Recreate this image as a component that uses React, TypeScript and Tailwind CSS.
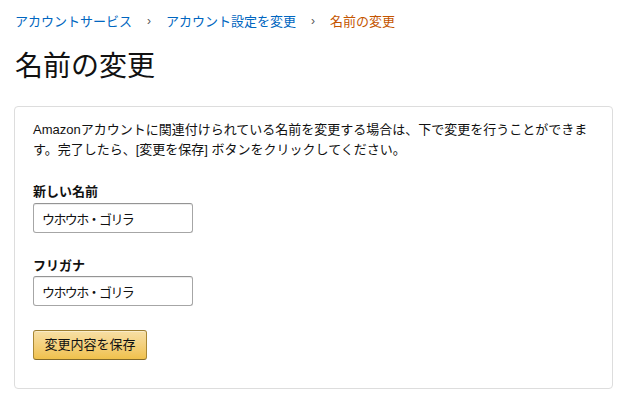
import React from "react";

export default function App() {
  return (
    <div
      className="w-[630px] h-[420px] bg-white text-[#111] px-[14px] pt-[12px]"
      style={{ fontFamily: '"Liberation Sans", "Noto Sans CJK JP", sans-serif' }}
    >
      <nav className="flex items-center text-[13px] leading-[19px]">
        <a className="text-[#0066c0] pl-[1px]">アカウントサービス</a>
        <span className="text-[#555] text-[12px] mx-[15px]">›</span>
        <a className="text-[#0066c0]">アカウント設定を変更</a>
        <span className="text-[#555] text-[12px] mx-[15px]">›</span>
        <span className="text-[#c45500]">名前の変更</span>
      </nav>
      <h1 className="mt-[18px] text-[28px] leading-[36px] font-normal pl-[1px]">名前の変更</h1>
      <div className="mt-[21px] w-[599px] border border-[#ddd] rounded-[4px] px-[18px] pt-[13px] pb-[28px]">
        <p className="text-[13px] leading-[20px] whitespace-nowrap">
          Amazonアカウントに関連付けられている名前を変更する場合は、下で変更を行うことができま
          <br />
          す。完了したら、[変更を保存] ボタンをクリックしてください。
        </p>
        <div className="mt-[22px] flex flex-col">
          <label className="text-[13px] leading-[19px] font-bold mb-[2px]">新しい名前</label>
          <input
            readOnly
            value="ウホウホ・ゴリラ"
            className="w-[160px] h-[30px] border border-[#a6a6a6] border-t-[#949494] rounded-[3px] px-[8px] text-[13px] tracking-[-1.6px] text-[#111] outline-none shadow-[inset_0_1px_0_rgba(0,0,0,0.07)]"
          />
        </div>
        <div className="mt-[23px] flex flex-col">
          <label className="text-[13px] leading-[19px] font-bold mb-[1px]">フリガナ</label>
          <input
            readOnly
            value="ウホウホ・ゴリラ"
            className="w-[160px] h-[30px] border border-[#a6a6a6] border-t-[#949494] rounded-[3px] px-[8px] text-[13px] tracking-[-1.6px] text-[#111] outline-none shadow-[inset_0_1px_0_rgba(0,0,0,0.07)]"
          />
        </div>
        <button className="mt-[24px] h-[30px] w-[114px] flex items-center justify-center rounded-[3px] border border-[#a88734] border-t-[#9c7e31] border-b-[#846a29] bg-gradient-to-b from-[#f7dfa5] to-[#f0c14b] text-[13px] text-[#111] shadow-[inset_0_1px_0_rgba(255,255,255,0.4)]">
          変更内容を保存
        </button>
      </div>
    </div>
  );
}
